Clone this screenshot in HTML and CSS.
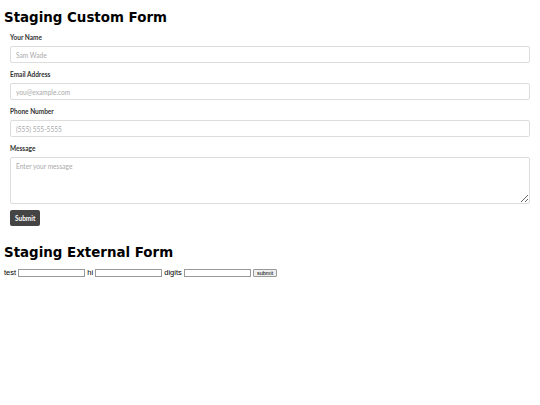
FILE: index.html
```html
<!DOCTYPE html>
<html lang="en">
<head>
    <meta charset="UTF-8">
    <meta name="viewport" content="width=device-width, initial-scale=1.0">
    <title>Staging Forms</title>
    <link rel="stylesheet" href="styles.css">
</head>
<body>

    <!-- Custom Form -->
    <h1 class="page-title">Staging Custom Form</h1>
    <form class="custom-form">
        <div class="field">
            <label class="field__label" for="name">Your Name</label>
            <input class="field__input" type="text" id="name" placeholder="Sam Wade">
        </div>
        <div class="field">
            <label class="field__label" for="email">Email Address</label>
            <input class="field__input" type="email" id="email" placeholder="you@example.com">
        </div>
        <div class="field">
            <label class="field__label" for="phone">Phone Number</label>
            <input class="field__input" type="tel" id="phone" placeholder="(555) 555-5555">
        </div>
        <div class="field field--last">
            <label class="field__label" for="message">Message</label>
            <textarea class="field__input field__input--area" id="message" placeholder="Enter your message"></textarea>
        </div>
        <button class="custom-form__submit" type="submit">Submit</button>
    </form>

    <!-- External Form -->
    <h1 class="page-title page-title--external">Staging External Form</h1>
    <form class="external-form">
        test <input class="external-form__input" type="text" name="test">
        hi <input class="external-form__input" type="text" name="hi">
        digits <input class="external-form__input" type="text" name="digits">
        <input class="external-form__submit" type="submit" value="submit">
    </form>

</body>
</html>
```

FILE: styles.css
```css
body {
    margin: 0;
    padding: 4px;
    background-color: #fff;
    color: #000;
    font-family: 'Liberation Sans', Arial, sans-serif;
    font-size: 8px;
}

.page-title {
    font-family: 'DejaVu Sans', Verdana, sans-serif;
    font-size: 13.4px;
    font-weight: 700;
    line-height: 16px;
    margin: 6px 0 8px;
}

.page-title--external {
    margin-top: 19px;
    margin-bottom: 7px;
}

/* Custom Form */
.custom-form {
    padding: 0 6px;
    font-family: Lato, 'Open Sans', sans-serif;
}

.field {
    display: flex;
    flex-direction: column;
    gap: 4px;
    margin-bottom: 8px;
}

.field--last {
    margin-bottom: 6px;
}

.field__label {
    font-size: 6.5px;
    font-weight: 700;
    color: #333;
    line-height: 8px;
}

.field__input {
    box-sizing: border-box;
    height: 17px;
    padding: 0 5px;
    border: 1px solid #ddd;
    border-radius: 2px;
    font-family: Lato, 'Open Sans', sans-serif;
    font-size: 6.6px;
    color: #333;
    outline: none;
}

.field__input::placeholder {
    color: #aaa;
}

.field__input--area {
    height: 47px;
    padding-top: 4px;
    resize: vertical;
}

.custom-form__submit {
    display: block;
    height: 16px;
    padding: 0 5px;
    border: none;
    border-radius: 2px;
    background-color: #444;
    color: #fff;
    font-family: Lato, 'Open Sans', sans-serif;
    font-size: 6.5px;
    font-weight: 700;
    cursor: pointer;
}

/* External Form */
.external-form {
    font-size: 7.5px;
    line-height: 9px;
}

.external-form__input {
    box-sizing: border-box;
    width: 67px;
    height: 8px;
    padding: 0;
    border: 1px solid #999;
    font-size: 6px;
    vertical-align: middle;
}

.external-form__submit {
    box-sizing: border-box;
    height: 8px;
    padding: 0 3px;
    border: 1px solid #999;
    border-radius: 1px;
    background-color: #efefef;
    font-family: 'Liberation Sans', Arial, sans-serif;
    font-size: 5.5px;
    line-height: 6px;
    vertical-align: middle;
}
```
